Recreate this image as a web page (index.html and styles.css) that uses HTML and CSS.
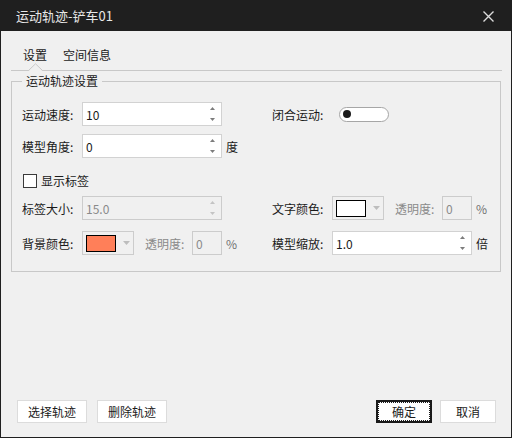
FILE: index.html
```html
<!DOCTYPE html>
<html>
<head>
<meta charset="utf-8">
<link rel="stylesheet" href="styles.css">
</head>
<body>
<div class="window">
  <div class="titlebar">
    <span class="title">运动轨迹-铲车01</span>
    <svg class="close" width="11" height="11" viewBox="0 0 11 11"><path d="M0.5 0.5 L10.5 10.5 M10.5 0.5 L0.5 10.5" stroke="#dcdcdc" stroke-width="1.4" fill="none"/></svg>
  </div>
  <div class="body">
    <div class="tabs">
      <span class="tab">设置</span>
      <span class="tab">空间信息</span>
      <svg class="caret" width="15" height="8" viewBox="0 0 15 8"><polygon points="0.5,8 7.5,1 14.5,8" fill="#f0f0f0"/><polyline points="0.5,7.5 7.5,0.8 14.5,7.5" fill="none" stroke="#c8c8c8" stroke-width="1"/></svg>
    </div>
    <fieldset class="group">
      <legend>运动轨迹设置</legend>
      <div class="row r1">
        <div class="half">
          <span class="lbl">运动速度:</span>
          <div class="spin wide"><span class="val">10</span><svg class="arrows" width="7" height="18" viewBox="0 0 7 18"><polygon points="1,5 3.5,2 6,5"/><polygon points="1,13 3.5,16 6,13"/></svg></div>
        </div>
        <div class="half">
          <span class="lbl">闭合运动:</span>
          <span class="toggle"><span class="knob"></span></span>
        </div>
      </div>
      <div class="row r2">
        <div class="half">
          <span class="lbl">模型角度:</span>
          <div class="spin wide"><span class="val">0</span><svg class="arrows" width="7" height="18" viewBox="0 0 7 18"><polygon points="1,5 3.5,2 6,5"/><polygon points="1,13 3.5,16 6,13"/></svg></div>
          <span class="unit">度</span>
        </div>
      </div>
      <div class="row r3">
        <span class="check"></span><span class="check-text">显示标签</span>
      </div>
      <div class="row r4">
        <div class="half">
          <span class="lbl">标签大小:</span>
          <div class="spin wide disabled"><span class="val">15.0</span><svg class="arrows" width="7" height="18" viewBox="0 0 7 18"><polygon points="1,5 3.5,2 6,5"/><polygon points="1,13 3.5,16 6,13"/></svg></div>
        </div>
        <div class="half">
          <span class="lbl">文字颜色:</span>
          <div class="cbtn"><span class="swatch white"></span><svg class="drop" width="7" height="4" viewBox="0 0 7 4"><polygon points="0,0 7,0 3.5,4"/></svg></div>
          <span class="sublbl">透明度:</span>
          <div class="small disabled"><span class="val">0</span></div>
          <span class="unit pct">%</span>
        </div>
      </div>
      <div class="row r5">
        <div class="half">
          <span class="lbl">背景颜色:</span>
          <div class="cbtn"><span class="swatch coral"></span><svg class="drop" width="7" height="4" viewBox="0 0 7 4"><polygon points="0,0 7,0 3.5,4"/></svg></div>
          <span class="sublbl">透明度:</span>
          <div class="small disabled"><span class="val">0</span></div>
          <span class="unit pct">%</span>
        </div>
        <div class="half">
          <span class="lbl">模型缩放:</span>
          <div class="spin wide"><span class="val">1.0</span><svg class="arrows" width="7" height="18" viewBox="0 0 7 18"><polygon points="1,5 3.5,2 6,5"/><polygon points="1,13 3.5,16 6,13"/></svg></div>
          <span class="unit">倍</span>
        </div>
      </div>
    </fieldset>
    <div class="footer">
      <button class="btn long">选择轨迹</button>
      <button class="btn long">删除轨迹</button>
      <span class="spacer"></span>
      <button class="btn short default">确定</button>
      <button class="btn short">取消</button>
    </div>
  </div>
</div>
</body>
</html>
```
FILE: styles.css
```css
html, body {
  margin: 0;
  padding: 0;
  background: #1f1f1f;
}
body {
  font-family: "Noto Sans CJK SC", "Noto Sans", sans-serif;
  font-size: 12px;
  color: #1a1a1a;
}
.window {
  width: 512px;
  height: 438px;
  box-sizing: border-box;
  background: #1f1f1f;
  padding: 0 1px 1px 1px;
  display: flex;
  flex-direction: column;
}
.titlebar {
  height: 31px;
  flex: none;
  display: flex;
  align-items: center;
  justify-content: space-between;
  padding: 0 17px 0 15px;
  color: #e8e8e8;
  font-size: 13px;
}
.close {
  display: block;
  margin-top: 1px;
}
.body {
  flex: 1;
  min-height: 0;
  background: #f0f0f0;
  display: flex;
  flex-direction: column;
}
.tabs {
  position: relative;
  margin: 0 9px 0 10px;
  height: 40px;
  box-sizing: border-box;
  padding: 16px 0 0 12px;
  border-bottom: 1px solid #c8c8c8;
  display: flex;
  gap: 16px;
  line-height: 16px;
}
.caret {
  position: absolute;
  left: 17px;
  bottom: -1px;
  display: block;
}
.group {
  margin: 3px 10px 0 10px;
  border: 1px solid #c8c8c8;
  padding: 14px 10px 16px 10px;
  min-width: 0;
}
.group legend {
  padding: 0 4px;
  margin: 0;
  line-height: 14px;
}
.row {
  display: flex;
  align-items: center;
  height: 24px;
}
.r2 { margin-top: 8px; }
.r3 { margin-top: 10px; }
.r4 { margin-top: 4px; }
.r5 { margin-top: 11px; }
.half {
  width: 250px;
  flex: none;
  display: flex;
  align-items: center;
}
.lbl {
  width: 60px;
  flex: none;
  white-space: nowrap;
}
.spin {
  height: 24px;
  box-sizing: border-box;
  border: 1px solid #d2d2d2;
  background: #fff;
  display: flex;
  align-items: center;
  justify-content: space-between;
  padding: 0 5px 0 3px;
}
.spin.wide { width: 140px; }
.arrows { display: block; fill: #7c7c7c; }
.spin.disabled {
  background: #f0f0f0;
  border-color: #cccccc;
  color: #8a8a8a;
}
.spin.disabled .arrows { fill: #c4c4c4; }
.unit { margin-left: 4px; }
.unit.pct { color: #707070; }
.toggle {
  margin-left: 7px;
  width: 50px;
  height: 15px;
  box-sizing: border-box;
  border: 1px solid #a6a6a6;
  border-radius: 8px;
  background: #fff;
  display: flex;
  align-items: center;
  padding-left: 3px;
}
.knob {
  width: 8px;
  height: 8px;
  border-radius: 50%;
  background: #1a1a1a;
}
.check {
  width: 14px;
  height: 14px;
  box-sizing: border-box;
  border: 1px solid #3a3a3a;
  background: #fff;
  margin-left: 1px;
  margin-top: 2px;
}
.check-text { margin-left: 4px; }
.cbtn {
  width: 52px;
  height: 24px;
  box-sizing: border-box;
  border: 1px solid #cccccc;
  background: #f0f0f0;
  display: flex;
  align-items: center;
  padding: 0 0 0 3px;
}
.swatch {
  width: 30px;
  height: 17px;
  box-sizing: border-box;
  border: 1px solid #000;
}
.swatch.white { background: #fff; }
.swatch.coral { background: #ff7f59; }
.drop {
  display: block;
  margin-left: 7px;
  fill: #bdbdbd;
}
.sublbl {
  margin-left: 11px;
  width: 47px;
  flex: none;
  color: #8a8a8a;
  white-space: nowrap;
}
.small {
  width: 30px;
  height: 24px;
  box-sizing: border-box;
  border: 1px solid #cccccc;
  background: #f0f0f0;
  color: #8a8a8a;
  display: flex;
  align-items: center;
  padding-left: 3px;
}
.footer {
  margin-top: auto;
  display: flex;
  align-items: center;
  padding: 0 15px 14px 16px;
}
.btn {
  position: relative;
  height: 23px;
  box-sizing: border-box;
  border: 1px solid #dcdcdc;
  border-radius: 0;
  background: #fff;
  font-family: inherit;
  font-size: 12px;
  color: #1a1a1a;
  padding: 0;
  line-height: 20px;
}
.btn.long { width: 70px; }
.btn.long + .btn.long { margin-left: 10px; }
.btn.short { width: 56px; }
.btn.short + .btn.short { margin-left: 8px; }
.btn.default { border: 2px solid #1a1a1a; }
.btn.default::after {
  content: "";
  position: absolute;
  inset: 0;
  border: 1px dotted #1a1a1a;
}
.spacer { flex: 1; }
```
